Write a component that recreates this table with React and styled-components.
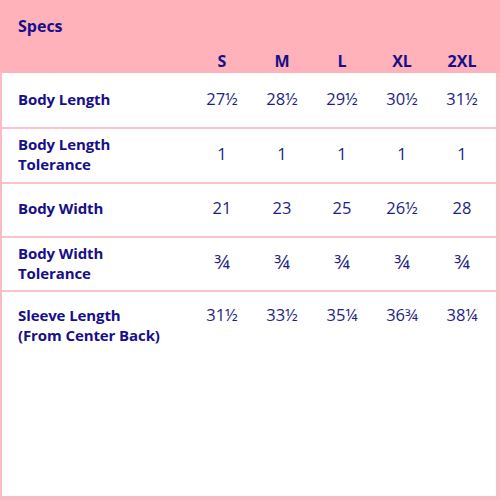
import React from "react";
import styled, { createGlobalStyle } from "styled-components";

const GlobalStyle = createGlobalStyle`
  body {
    margin: 0;
    font-family: "Open Sans", "Noto Sans", sans-serif;
    background: #fff;
  }
`;

const SIZES = ["S", "M", "L", "XL", "2XL"];

const ROWS = [
  { label: ["Body Length"], values: ["27½", "28½", "29½", "30½", "31½"] },
  { label: ["Body Length", "Tolerance"], values: ["1", "1", "1", "1", "1"] },
  { label: ["Body Width"], values: ["21", "23", "25", "26½", "28"] },
  { label: ["Body Width", "Tolerance"], values: ["¾", "¾", "¾", "¾", "¾"] },
  {
    label: ["Sleeve Length", "(From Center Back)"],
    values: ["31½", "33½", "35¼", "36¾", "38¼"],
  },
];

const Table = styled.div`
  width: 500px;
  height: 500px;
  box-sizing: border-box;
  display: flex;
  flex-direction: column;
  border-left: 2px solid #f8bcc3;
  border-right: 4px solid #f8bcc3;
  border-bottom: 4px solid #f8bcc3;
  background: #fff;
  color: #170f8a;
`;

const Header = styled.div`
  height: 73px;
  margin: 0 -4px 0 -2px;
  padding: 0 8px 0 18px;
  box-sizing: border-box;
  background: #ffb2ba;
  display: flex;
  flex-direction: column;
  justify-content: space-between;
`;

const Title = styled.div`
  font-size: 16px;
  font-weight: 700;
  padding-top: 15px;
`;

const Grid = styled.div`
  display: grid;
  grid-template-columns: 174px repeat(5, 60px);
  align-items: center;
`;

const SizeLabel = styled.div`
  font-size: 16px;
  font-weight: 700;
  text-align: center;
  padding-bottom: 1px;
`;

const Row = styled(Grid)`
  padding-left: 16px;
  height: ${(p) => (p.$last ? "auto" : "54.3px")};
  flex: ${(p) => (p.$last ? 1 : "none")};
  align-items: ${(p) => (p.$last ? "start" : "center")};
  padding-top: ${(p) => (p.$last ? "13px" : "0")};
  padding-bottom: ${(p) => (p.$last ? "0" : "3px")};
  box-sizing: border-box;
  border-top: ${(p) => (p.$first ? "none" : "2px solid #f8c3c9")};
`;

const Label = styled.div`
  font-size: 15px;
  font-weight: 700;
  line-height: 20px;
  letter-spacing: -0.1px;
`;

const Value = styled.div`
  font-size: 16.5px;
  line-height: 20px;
  text-align: center;
  color: #231d86;
`;

const Frac = styled.span`
  font-size: 20px;
  font-weight: 500;
`;

export default function App() {
  return (
    <>
      <GlobalStyle />
      <Table>
        <Header>
          <Title>Specs</Title>
          <Grid>
            <span />
            {SIZES.map((s) => (
              <SizeLabel key={s}>{s}</SizeLabel>
            ))}
          </Grid>
        </Header>
        {ROWS.map((row, i) => (
          <Row key={i} $first={i === 0} $last={i === ROWS.length - 1}>
            <Label>
              {row.label.map((line) => (
                <div key={line}>{line}</div>
              ))}
            </Label>
            {row.values.map((v, j) => (
              <Value key={j}>{v === "¾" ? <Frac>{v}</Frac> : v}</Value>
            ))}
          </Row>
        ))}
      </Table>
    </>
  );
}
